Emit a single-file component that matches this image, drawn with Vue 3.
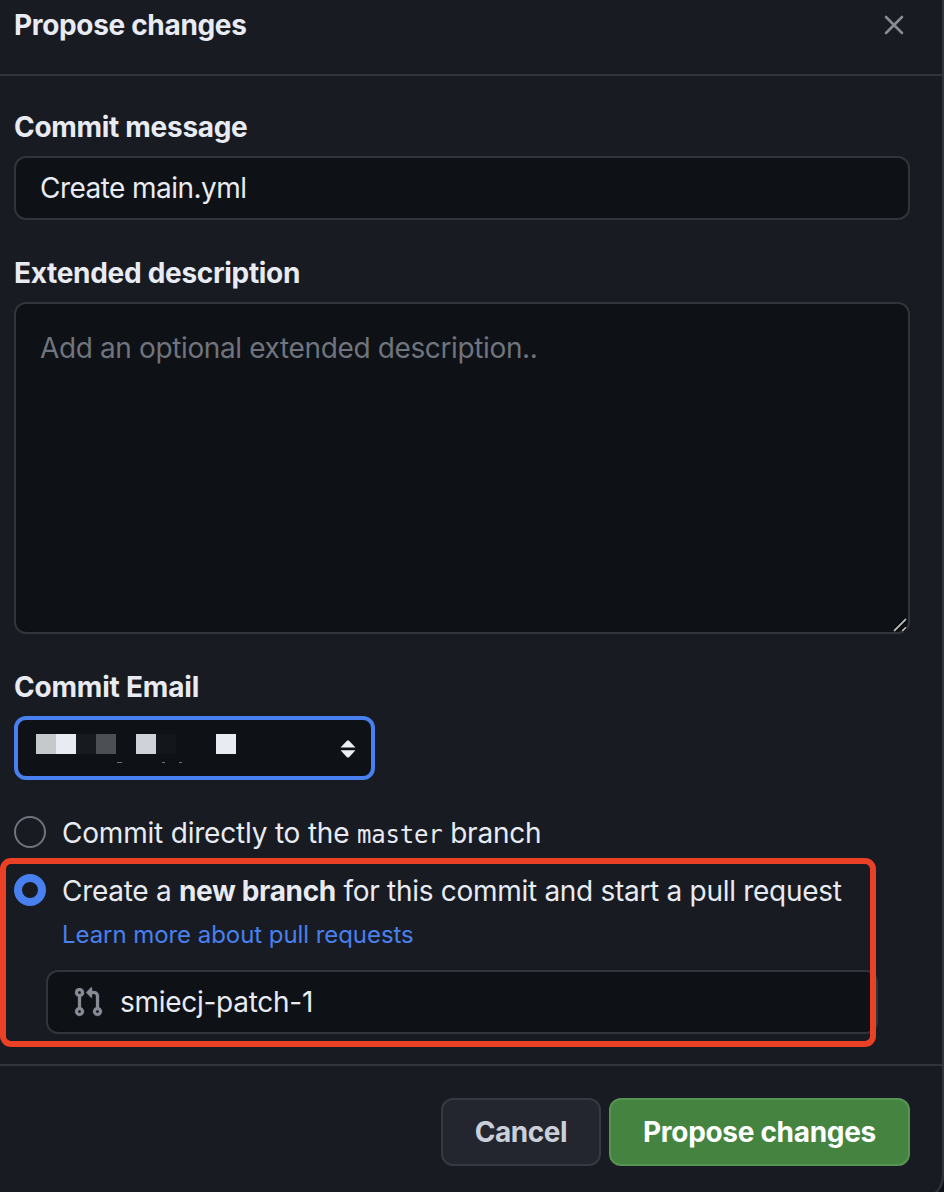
<script setup>
import { ref } from 'vue'

const message = ref('Create main.yml')
const description = ref('')
const branch = ref('smiecj-patch-1')
const target = ref('new')

// Pixelated blocks that hide the e-mail address
const blocks = ['#c6c9cc', '#e8ebf2', '#171a1e', '#4c4f54', '', '#cfd2d8', '#13161a', '', '', '#e8ebf2']
</script>

<template>
  <main class="dialog">
    <header class="head">
      <h1 class="title">Propose changes</h1>
      <svg class="close" viewBox="0 0 20 20" width="20" height="20">
        <path d="M2 2 18 18M18 2 2 18" fill="none" stroke="#868b94" stroke-width="2.6" stroke-linecap="round" />
      </svg>
    </header>

    <section class="body">
      <label class="label l-message">Commit message</label>
      <input v-model="message" class="field message" type="text" />

      <label class="label l-desc">Extended description</label>
      <div class="area-wrap">
        <textarea v-model="description" class="field area" placeholder="Add an optional extended description.."></textarea>
        <svg class="grip" viewBox="0 0 14 14" width="14" height="14">
          <path d="M1 13 13 1M9.200 13 13 9.400" fill="none" stroke="#000" stroke-width="4" />
          <path d="M1 13 13 1M9.200 13 13 9.400" fill="none" stroke="#b4b5b7" stroke-width="1.800" />
        </svg>
      </div>

      <label class="label l-email">Commit Email</label>
      <div class="select">
        <div class="mosaic">
          <div class="blocks">
            <i v-for="(c, i) in blocks" :key="i" class="block" :style="{ background: c }"></i>
          </div>
          <svg class="specks" viewBox="0 0 200 2" width="200" height="2">
            <path d="M81 1.500h5M126 1.500h3M143 1.500h3" stroke="#6d7075" stroke-width="1" />
          </svg>
        </div>
        <svg class="arrows" viewBox="0 0 16 18" width="16" height="18">
          <path d="M.5 7.600 7 .7Q8 0 9 .7L15.500 7.600ZM.5 10.200 7 17.200Q8 18 9 17.200L15.500 10.200Z" fill="#eceff4" />
        </svg>
      </div>

      <div class="option first" @click="target = 'direct'">
        <span class="radio" :class="{ on: target === 'direct' }"></span>
        <span class="text t-direct">Commit directly to the <code>master</code> branch</span>
      </div>

      <div class="group">
        <div class="option" @click="target = 'new'">
          <span class="radio" :class="{ on: target === 'new' }"></span>
          <span class="text t-new">Create a <b>new branch</b> for this commit and start a pull request</span>
        </div>
        <a class="link">Learn more about pull requests</a>
        <div class="field branch">
          <svg class="pr" viewBox="0 0 16 16" width="32" height="32">
            <path fill="#868b94" stroke="#868b94" stroke-width=".15" d="M1.500 3.250a2.250 2.250 0 1 1 3 2.122v5.256a2.251 2.251 0 1 1-1.500 0V5.372A2.250 2.250 0 0 1 1.500 3.250Zm5.677-.177L9.573.677A.250.250 0 0 1 10 .854V2.500h1A2.500 2.500 0 0 1 13.500 5v5.628a2.251 2.251 0 1 1-1.500 0V5a1 1 0 0 0-1-1h-1v1.646a.250.250 0 0 1-.427.177L7.177 3.427a.250.250 0 0 1 0-.354ZM3.750 2.500a.750.750 0 1 0 0 1.500.750.750 0 0 0 0-1.500Zm0 9.500a.750.750 0 1 0 0 1.500.750.750 0 0 0 0-1.500Zm8.250.750a.750.750 0 1 0 1.500 0 .750.750 0 0 0-1.500 0Z" />
          </svg>
          <input v-model="branch" class="branch-name" type="text" />
        </div>
        <div class="marker"></div>
      </div>
    </section>

    <footer class="foot">
      <button class="btn cancel"><span>Cancel</span></button>
      <button class="btn primary"><span>Propose changes</span></button>
    </footer>
  </main>
</template>

<style>
body {
  background: #0e1115;
  overflow: hidden;
}
</style>

<style scoped>
* {
  box-sizing: border-box;
}
.dialog {
  width: 944px;
  height: 1200px;
  display: flex;
  flex-direction: column;
  background: #181b22;
  border-right: 2px solid #31343b;
  border-bottom: 2px solid #31343b;
  border-bottom-right-radius: 24px;
  color: #e8ebf2;
  font-family: Inter, "Liberation Sans", sans-serif;
  font-size: 28px;
  font-weight: 430;
}
.head {
  height: 76px;
  flex: none;
  display: flex;
  justify-content: space-between;
  padding: 5px 38px 0 14px;
  border-bottom: 2px solid #31343b;
}
.title {
  margin: 0;
  font-size: 28px;
  font-weight: 650;
  line-height: 41px;
  letter-spacing: -0.33px;
  white-space: nowrap;
}
.close {
  margin-top: 10px;
}
.body {
  height: 988px;
  flex: none;
  display: flex;
  flex-direction: column;
  padding: 31px 32px 0 14px;
}
.label {
  font-weight: 650;
  line-height: 41px;
  height: 40px;
  letter-spacing: -0.3px;
  white-space: nowrap;
}
.l-email {
  letter-spacing: -0.2px;
}
.field {
  background: #0e1115;
  border: 2px solid #31343b;
  border-radius: 12px;
  outline: none;
  color: #e8ebf2;
  font: inherit;
}
.message {
  display: block;
  width: 100%;
  height: 64px;
  margin: 9px 0 33px;
  padding: 0 24px;
  letter-spacing: -0.55px;
}
.area-wrap {
  position: relative;
  height: 332px;
  margin: 9px 0 33px;
}
.area {
  display: block;
  width: 100%;
  height: 100%;
  resize: none;
  margin: 0;
  padding: 24px 24px;
  line-height: 41px;
  letter-spacing: -0.37px;
}
.area::placeholder {
  color: #6f747e;
  opacity: 1;
}
.grip {
  position: absolute;
  right: 3px;
  bottom: 2px;
}
.select {
  width: 361px;
  height: 64px;
  margin-top: 9px;
  flex: none;
  display: flex;
  justify-content: space-between;
  padding: 14px 15px 0 18px;
  background: #0e1115;
  border: 4px solid #4880f0;
  border-radius: 12px;
}
.mosaic {
  width: 200px;
}
.blocks {
  display: flex;
}
.block {
  width: 20px;
  height: 20px;
}
.specks {
  display: block;
  margin-top: 7px;
}
.arrows {
  margin-top: 6px;
}
.option {
  display: flex;
  align-items: flex-start;
  gap: 16px;
  height: 40px;
}
.first {
  margin-top: 36px;
}
.radio {
  width: 32px;
  height: 32px;
  flex: none;
  border: 2px solid #6f747e;
  border-radius: 50%;
}
.radio.on {
  border: 8px solid #4880f0;
}
.text {
  line-height: 35px;
  white-space: nowrap;
}
.t-direct {
  letter-spacing: -0.2px;
}
.t-new {
  letter-spacing: -0.29px;
}
.text b {
  font-weight: 650;
  letter-spacing: -0.35px;
}
code {
  font-family: "DejaVu Sans Mono", monospace;
  font-size: 24px;
}
.group {
  position: relative;
  margin-top: 18px;
  display: flex;
  flex-direction: column;
}
.link {
  height: 40px;
  margin-left: 48px;
  line-height: 41px;
  font-size: 24px;
  letter-spacing: -0.06px;
  color: #4880f0;
  white-space: nowrap;
}
.branch {
  width: 832px;
  height: 64px;
  margin: 16px 0 0 32px;
  display: flex;
  align-items: center;
  gap: 16px;
  padding-left: 24px;
}
.branch-name {
  flex: 1;
  min-width: 0;
  padding: 0;
  border: 0;
  outline: none;
  background: transparent;
  color: inherit;
  font: inherit;
  letter-spacing: -0.28px;
}
.marker {
  position: absolute;
  left: -14px;
  top: -16px;
  width: 876px;
  height: 189px;
  border: 6px solid #ea4025;
  border-radius: 11px;
  pointer-events: none;
}
.foot {
  flex: 1;
  display: flex;
  justify-content: flex-end;
  align-items: flex-start;
  gap: 8px;
  padding: 32px 32px 0 0;
  border-top: 2px solid #31343b;
}
.btn {
  height: 68px;
  padding: 0;
  border-radius: 12px;
  font: inherit;
  font-weight: 650;
  letter-spacing: -0.3px;
  white-space: nowrap;
}
.cancel {
  width: 160px;
  background: #23262e;
  border: 2px solid #363941;
  color: #c9d0d9;
  letter-spacing: -0.45px;
}
.primary {
  width: 301px;
  background: #448440;
  border: 2px solid #579453;
  color: #fff;
}
</style>
